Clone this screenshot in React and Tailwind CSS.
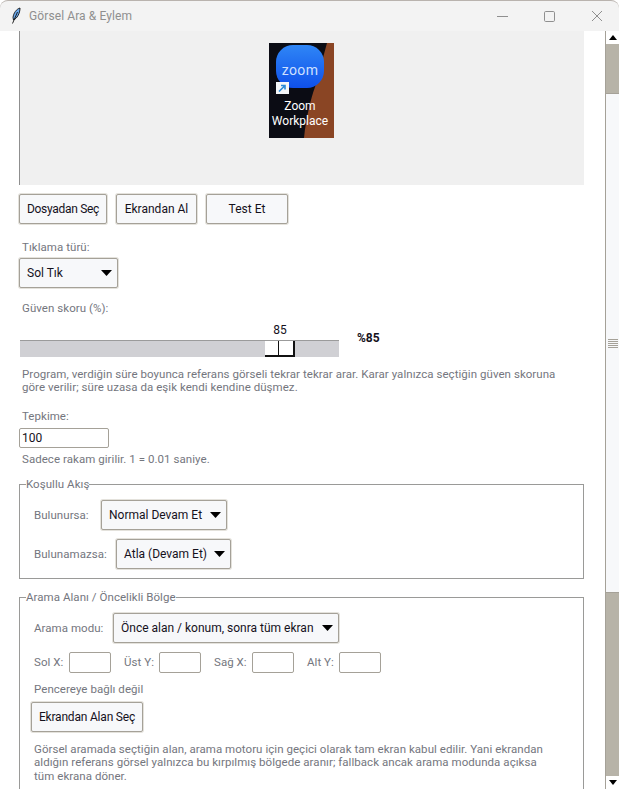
import React from 'react';

const FONT = "font-['Roboto','Noto_Sans',sans-serif]";

function TkButton({ children, className = '' }) {
  return (
    <div className={`flex items-center justify-center h-[30px] bg-[#f7f8fa] border border-[#a5a198] rounded-[2px] shadow-[0_0_0_1px_#e4e2dc] text-[12px] text-[#15111c] ${className}`}>
      {children}
    </div>
  );
}

function Combo({ label, className = '' }) {
  return (
    <div className={`flex items-center justify-between h-[30px] pl-[7px] pr-[5px] bg-[#f7f8fa] border border-[#a5a198] rounded-[2px] shadow-[0_0_0_1px_#e4e2dc] text-[12px] text-[#15111c] ${className}`}>
      <span className="whitespace-nowrap">{label}</span>
      <svg width="11" height="6" viewBox="0 0 11 6"><path d="M0 0h11L5.5 6z" fill="#000" /></svg>
    </div>
  );
}

function Entry({ value = '', className = '' }) {
  return (
    <div className={`bg-white border border-[#a5a198] rounded-[2px] px-[2px] text-[12px] leading-[18px] text-[#15111c] ${className}`}>
      {value}
    </div>
  );
}

function Muted({ children, className = '' }) {
  return <div className={`text-[11.5px] leading-[13px] tracking-[0.05px] text-[#74767e] whitespace-nowrap ${className}`}>{children}</div>;
}

function Group({ title, className = '', children }) {
  return (
    <fieldset className={`mx-[19px] w-[565px] border border-[#9a9a98] px-[11px] ${className}`}>
      <legend className="ml-[-5px] text-[11.5px] leading-[13px] tracking-[0.05px] text-[#74767e]">{title}</legend>
      {children}
    </fieldset>
  );
}

function Thumbnail() {
  return (
    <svg width="65" height="95" viewBox="0 0 65 95" className="block">
      <defs>
        <linearGradient id="zoomBlue" x1="0" y1="0" x2="0" y2="1">
          <stop offset="0" stopColor="#2f86f6" />
          <stop offset="1" stopColor="#0f50ea" />
        </linearGradient>
      </defs>
      <rect width="65" height="95" fill="#0b0c14" />
      <path d="M58 0H65V95H35C37 75 42 55 46 44Z" fill="#8a4524" />
      <rect x="7" y="2" width="48" height="43" rx="17" fill="url(#zoomBlue)" />
      <text x="31" y="32" textAnchor="middle" fontFamily="'Roboto',sans-serif" fontSize="14" letterSpacing="0.4" fill="#cfe0ff">zoom</text>
      <rect x="7" y="39" width="13" height="12" fill="#f4f6f8" />
      <path d="M10 48.5L15.5 43M12 42.5H16V46.5" stroke="#2a8ad8" strokeWidth="1.6" fill="none" />
      <text x="31" y="67" textAnchor="middle" fontFamily="'Roboto',sans-serif" fontSize="12" fill="#ffffff">Zoom</text>
      <text x="31" y="82" textAnchor="middle" fontFamily="'Roboto',sans-serif" fontSize="12" fill="#ffffff">Workplace</text>
    </svg>
  );
}

function Scrollbar() {
  return (
    <div className="flex flex-col w-[14px] h-full border-l border-[#a5a198] bg-[#b7b3a8]">
      <div className="flex items-center justify-center h-[13px] bg-white shrink-0">
        <svg width="8" height="5" viewBox="0 0 8 5"><path d="M4 0l4 5H0z" fill="#000" /></svg>
      </div>
      <div className="h-[49px] shrink-0" />
      <div className="flex items-center justify-center h-[500px] shrink-0 bg-[#f7f8fa] border-y border-[#a5a198]">
        <div className="flex flex-col gap-[1px] w-[10px]">
          {[0, 1, 2, 3, 4].map(i => <div key={i} className="h-[1px] bg-[#a5a198]" />)}
        </div>
      </div>
      <div className="flex-1" />
      <div className="flex items-center justify-center h-[13px] bg-white shrink-0">
        <svg width="8" height="5" viewBox="0 0 8 5"><path d="M0 0h8L4 5z" fill="#000" /></svg>
      </div>
    </div>
  );
}

export default function App() {
  return (
    <div className={`flex flex-col w-[619px] h-[789px] overflow-hidden bg-white ${FONT}`}>
      {/* title bar */}
      <div className="flex items-center justify-between h-[31px] shrink-0 bg-[#f3f3f3] border-t border-[#b9b3ae] rounded-t-[8px]">
        <div className="flex items-center">
          <svg width="14" height="18" viewBox="0 0 14 18" className="ml-[9px]">
            <path d="M11 1C7.5 2 4.5 6 4 10.5L4.5 13C8 11.5 11 6.5 11 1z" fill="#6aa8ec" stroke="#111" strokeWidth="0.9" />
            <path d="M8.5 5L3.5 16.5" stroke="#111" strokeWidth="0.9" />
          </svg>
          <span className="ml-[6px] text-[12px] tracking-[0.1px] text-[#8f8f8f]">Görsel Ara &amp; Eylem</span>
        </div>
        <div className="flex items-center mr-[16px] gap-[36px]">
          <svg width="11" height="11" viewBox="0 0 11 11"><path d="M0 5.5h11" stroke="#8f8f8f" /></svg>
          <svg width="11" height="11" viewBox="0 0 11 11"><rect x=".5" y=".5" width="10" height="10" rx="1.2" fill="none" stroke="#8f8f8f" /></svg>
          <svg width="12" height="12" viewBox="0 0 12 12"><path d="M1 1l10 10M11 1L1 11" stroke="#8f8f8f" /></svg>
        </div>
      </div>

      <div className="flex flex-1 min-h-0">
        {/* scrolling content */}
        <div className="w-[605px] shrink-0 overflow-hidden">
          <div className="flex justify-center ml-[19px] w-[565px] h-[154px] pt-[12px] pr-[2px] bg-[#f0f0f0] border-l border-[#8f8f8f]">
            <Thumbnail />
          </div>

          <div className="flex gap-[9px] ml-[19px] mt-[9px]">
            <TkButton className="w-[88px] tracking-[-0.3px]">Dosyadan Seç</TkButton>
            <TkButton className="w-[81px]">Ekrandan Al</TkButton>
            <TkButton className="w-[82px]">Test Et</TkButton>
          </div>

          <Muted className="ml-[22px] mt-[17px]">Tıklama türü:</Muted>
          <Combo label="Sol Tık" className="ml-[19px] mt-[4px] w-[99px]" />

          <Muted className="ml-[22px] mt-[14px]">Güven skoru (%):</Muted>

          {/* scale */}
          <div className="flex ml-[20px] mt-[9px]">
            <div className="w-[319px]">
              <div className="w-[30px] ml-[245px] text-center text-[12px] leading-[13px] text-[#15111c]">85</div>
              <div className="flex justify-start h-[17px] mt-[3px] pl-[245px] bg-[#d0d0d4] border-t border-[#9b9b9b]">
                <div className="flex w-[30px] h-[16px] bg-white border-r-2 border-b-2 border-[#111]">
                  <div className="w-[14px] h-full border-r border-[#111]" />
                </div>
              </div>
            </div>
            <div className="ml-[18px] mt-[7px] text-[12px] leading-[14px] font-bold text-[#15111c]">%85</div>
          </div>

          <Muted className="ml-[22px] mt-[11px]">Program, verdiğin süre boyunca referans görseli tekrar tekrar arar. Karar yalnızca seçtiğin güven skoruna</Muted>
          <Muted className="ml-[22px]">göre verilir; süre uzasa da eşik kendi kendine düşmez.</Muted>

          <Muted className="ml-[22px] mt-[16px]">Tepkime:</Muted>
          <Entry value="100" className="h-[20px] ml-[19px] mt-[5px] w-[90px]" />
          <Muted className="ml-[22px] mt-[5px]">Sadece rakam girilir. 1 = 0.01 saniye.</Muted>

          <Group title="Koşullu Akış" className="mt-[12px] h-[101px]">
            <div className="flex items-center mt-[9px] ml-[3px]">
              <Muted className="w-[67px]">Bulunursa:</Muted>
              <Combo label="Normal Devam Et" className="w-[126px]" />
            </div>
            <div className="flex items-center mt-[9px] ml-[3px]">
              <Muted className="w-[82px]">Bulunamazsa:</Muted>
              <Combo label="Atla (Devam Et)" className="w-[115px]" />
            </div>
          </Group>

          <Group title="Arama Alanı / Öncelikli Bölge" className="mt-[12px] h-[240px]">
            <div className="flex items-center mt-[9px] ml-[3px]">
              <Muted className="w-[79px]">Arama modu:</Muted>
              <Combo label="Önce alan / konum, sonra tüm ekran" className="w-[226px]" />
            </div>
            <div className="flex items-center mt-[9px] ml-[3px]">
              <Muted className="w-[35px]">Sol X:</Muted>
              <Entry className="h-[21px] w-[42px]" />
              <Muted className="w-[35px] ml-[13px]">Üst Y:</Muted>
              <Entry className="h-[21px] w-[42px]" />
              <Muted className="w-[38px] ml-[13px]">Sağ X:</Muted>
              <Entry className="h-[21px] w-[42px]" />
              <Muted className="w-[32px] ml-[13px]">Alt Y:</Muted>
              <Entry className="h-[21px] w-[42px]" />
            </div>
            <Muted className="ml-[3px] mt-[10px]">Pencereye bağlı değil</Muted>
            <TkButton className="w-[112px] mt-[6px] tracking-[-0.2px]">Ekrandan Alan Seç</TkButton>
            <Muted className="ml-[3px] mt-[11px]">Görsel aramada seçtiğin alan, arama motoru için geçici olarak tam ekran kabul edilir. Yani ekrandan</Muted>
            <Muted className="ml-[3px]">aldığın referans görsel yalnızca bu kırpılmış bölgede aranır; fallback ancak arama modunda açıksa</Muted>
            <Muted className="ml-[3px] mt-[1px]">tüm ekrana döner.</Muted>
          </Group>
        </div>
        <Scrollbar />
      </div>
    </div>
  );
}
